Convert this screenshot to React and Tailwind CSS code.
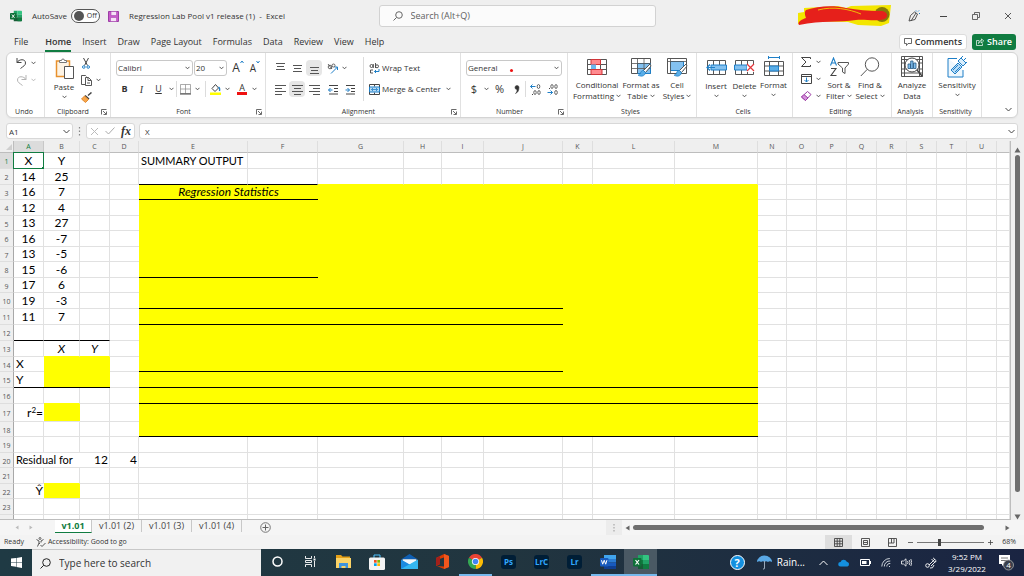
import React from "react";

/* ---------- small shared parts ---------- */

function Svg({ w, h, children, className = "" }) {
  return (
    <svg
      width={w}
      height={h}
      viewBox={`0 0 ${w} ${h}`}
      fill="none"
      stroke="#444444"
      strokeWidth="1"
      className={`shrink-0 ${className}`}
      aria-hidden="true"
    >
      {children}
    </svg>
  );
}

function Chevron({ className = "" }) {
  return (
    <Svg w={5} h={4} className={className}>
      <path d="M.5 .8 2.5 2.8 4.5 .8" strokeWidth=".9" />
    </Svg>
  );
}

function IconButton({ label, active, className = "w-4", children }) {
  return (
    <button
      type="button"
      aria-label={label}
      className={`flex h-4 items-center justify-center rounded-sm ${active ? "bg-[#e6e6e6]" : ""} ${className}`}
    >
      {children}
    </button>
  );
}

function Divider() {
  return <span className="h-4 w-px shrink-0 bg-[#dcdcdc]" />;
}

function Group({ name, launcher, className, children }) {
  return (
    <section aria-label={name} className={`flex shrink-0 flex-col border-r border-[#e1e1e1] ${className}`}>
      <div className="flex h-[53px]">{children}</div>
      <div className="flex h-[11px] items-center pr-[3px] text-[7px] leading-[11px]">
        <span className="flex-1 text-center">{name}</span>
        {launcher && (
          <button type="button" aria-label={`${name} settings`}>
            <Svg w={6} h={6}>
              <path d="M.5 5.5V.5h5M2 2l3 3M5.5 2.5v3h-3" strokeWidth=".8" />
            </Svg>
          </button>
        )}
      </div>
    </section>
  );
}

function BigButton({ lines, menu, chevronBelow, icon, className }) {
  return (
    <button type="button" className={`flex shrink-0 flex-col items-center ${className}`}>
      <span className="flex h-[25px] items-center">{icon}</span>
      {lines.map((line, i) => (
        <span key={line} className="flex items-center gap-[2px] text-[8px] leading-[11px] whitespace-nowrap">
          {line}
          {menu && i === lines.length - 1 && <Chevron />}
        </span>
      ))}
      {chevronBelow && (
        <span className="flex h-[10px] items-center">
          <Chevron />
        </span>
      )}
    </button>
  );
}

function Combo({ label, value, className }) {
  return (
    <label className={`flex h-4 items-center rounded-[3px] border border-[#c8c8c8] bg-white pr-[2px] pl-[1px] ${className}`}>
      <span className="sr-only">{label}</span>
      <select className="h-[14px] min-w-0 flex-1 appearance-none bg-transparent text-[8px] leading-[14px] outline-none" defaultValue={value}>
        <option>{value}</option>
      </select>
      <Chevron />
    </label>
  );
}

/* ---------- ribbon icons ---------- */

function Lines({ rows }) {
  return (
    <Svg w={11} h={11}>
      {rows.map(([x1, x2, y]) => (
        <path key={y} d={`M${x1} ${y}.5H${x2}`} stroke="#555555" />
      ))}
    </Svg>
  );
}

function GridIcon({ children }) {
  return (
    <Svg w={20} h={20}>
      <path d="M.5 2.5h19v15H.5zM.5 7.5h19M.5 12.5h19M7 2.5v15M13.5 2.5v15" stroke="#555555" fill="white" />
      {children}
    </Svg>
  );
}

const brush = (
  <>
    <path d="M19 7 12.5 13.5 14.5 15.5 20 9z" fill="white" stroke="#555555" />
    <path d="M12.5 13.5c-2 0-2.500 1-3 2.500-.4 1.500-1.500 2-2.500 2 2.500 2 7 1.500 7.500-2.500z" fill="#5aaee8" stroke="#1e7fc7" strokeWidth=".7" />
  </>
);

function ConditionalIcon() {
  return (
    <GridIcon>
      <path d="M4 2.500h9.500v5H4z" fill="#ff8a8f" stroke="#d13438" />
      <path d="M4 7.500h5v5H4z" fill="#6db7ee" stroke="none" />
      <path d="M4 12.500h11v5H4z" fill="#ff8a8f" stroke="#d13438" />
    </GridIcon>
  );
}

function FormatTableIcon() {
  return (
    <Svg w={21} h={20}>
      <path d="M.5 1.500h19v15H.5z" fill="white" stroke="#555555" />
      <path d="M6.500 6.500h13v10h-13z" fill="#83c1f0" stroke="#1e7fc7" />
      <path d="M.5 6.500h19M.5 11.500h19M6.500 1.500v15M13 1.500v15" stroke="#555555" strokeWidth=".8" />
      {brush}
    </Svg>
  );
}

function CellStylesIcon() {
  return (
    <Svg w={21} h={20}>
      <path d="M.5 1.500h19v15H.5z" fill="white" stroke="#555555" />
      <path d="M3.500 4.500h13v9h-13z" fill="#83c1f0" stroke="#1e7fc7" />
      <path d="M.5 4.500h19M3.500 1.500v15" stroke="#555555" strokeWidth=".8" />
      {brush}
    </Svg>
  );
}

function InsertIcon() {
  return (
    <Svg w={21} h={17}>
      <path d="M1.500 1.500h18v14h-18zM7.500 1.500v14M13.500 1.500v14" stroke="#555555" fill="white" />
      <path d="M5 6h15.500v5H5z" fill="#83c1f0" stroke="#1e7fc7" />
      <path d="M1 8.500h8M4 5.500 1 8.500 4 11.500" stroke="#1e7fc7" strokeWidth="1.200" />
    </Svg>
  );
}

function DeleteIcon() {
  return (
    <Svg w={21} h={17}>
      <path d="M1.500 1.500h18v14h-18zM7.500 1.500v14M13.500 1.500v14" stroke="#555555" fill="white" />
      <path d="M.5 6H13v5H.5z" fill="#83c1f0" stroke="#1e7fc7" />
      <path d="M13 5h8v8h-8z" fill="white" stroke="none" />
      <path d="m13 5 7 7M20 5l-7 7" stroke="#e3353b" strokeWidth="1.200" />
    </Svg>
  );
}

function FormatIcon() {
  return (
    <Svg w={20} h={21}>
      <path d="M4 1.500h12M4.500 0v3M15.500 0v3" stroke="#1e7fc7" />
      <path d="M.5 5.500h19v14H.5zM.5 10h19M.5 15h19M5.500 5.500v14M14.500 5.500v14" stroke="#555555" fill="white" />
      <path d="M5.500 10h9v5h-9z" fill="#5aaee8" stroke="#1e7fc7" />
    </Svg>
  );
}

function SortIcon() {
  return (
    <Svg w={20} h={20}>
      <path d="M1.500 8.500 4.500 1l3 7.500M2.500 6h4" stroke="#1e7fc7" strokeWidth="1.100" />
      <path d="M2 11.500h5L2 18.500h5.500" strokeWidth="1.100" />
      <path d="M9 5.500h10.500v1.500L16 11v5.500l-2.500-1.500v-4L9 7z" stroke="#555555" />
    </Svg>
  );
}

function FindIcon() {
  return (
    <Svg w={20} h={20}>
      <circle cx="12" cy="7.500" r="6.700" stroke="#555555" />
      <path d="M7.300 12.300.8 19" stroke="#555555" />
    </Svg>
  );
}

function AnalyzeIcon() {
  return (
    <Svg w={22} h={22}>
      <path d="M.5 .5h21v20H.5zM.5 3.500h21M.5 7h21M.5 13h21M.5 17h21M3.500 .5v20M18.500 .5v20" stroke="#555555" fill="white" />
      <circle cx="11" cy="9" r="7" fill="white" stroke="#444444" />
      <path d="M7 8v4.500h2.500V8zM9.700 5v7.500H12V5zM12.500 7v5.500h2.500V7z" fill="#83c1f0" stroke="#2a5b84" strokeWidth=".8" />
      <path d="m16 14 5.500 6.500" strokeWidth="1.500" />
    </Svg>
  );
}

function SensitivityIcon() {
  return (
    <Svg w={20} h={22}>
      <path d="M1 2.500h9M1 2.500V21h15v-7" stroke="#1e7fc7" fill="#eef7fd" />
      <path d="m4 14 7-7 4 4-7 7z" fill="#b9dcf6" stroke="#1e7fc7" />
      <path d="m6 14 5-5M8 16l5-5" stroke="#1e7fc7" />
      <path d="m11 5 3-3 5 5-3 3zM14 2l2-2M16.500 4.500l2.500-2.500M19 7l1-1" stroke="#1e7fc7" fill="#d9edfb" />
    </Svg>
  );
}

/* ---------- title bar ---------- */

function ExcelLogo({ className = "" }) {
  return (
    <Svg w={16} h={16} className={className}>
      <g stroke="none">
        <path d="M5 1h5v5H5z" fill="#21a366" />
        <path d="M10 1h5a1 1 0 0 1 1 1v4h-6z" fill="#33c481" />
        <path d="M5 6h5v4H5z" fill="#107c41" />
        <path d="M10 6h6v4h-6z" fill="#21a366" />
        <path d="M5 10h11v4a1 1 0 0 1-1 1H5z" fill="#185c37" />
        <path d="M10 10h6v4a1 1 0 0 1-1 1h-5z" fill="#107c41" />
        <rect x="0" y="4" width="8.500" height="8.500" rx="1" fill="#0f7038" />
      </g>
      <path d="m2.500 6 3.500 4.500M6 6l-3.500 4.500" stroke="white" strokeWidth="1.200" />
    </Svg>
  );
}

function TitleBar() {
  return (
    <header className="grid h-8 shrink-0 grid-cols-[minmax(0,1fr)_minmax(0,277px)_minmax(0,1fr)] items-center pl-[10px]">
      <div className="flex items-center whitespace-nowrap">
        <ExcelLogo className="h-3 w-3" />
        <label className="ml-[10px] flex items-center gap-1 text-[8px]">
          AutoSave
          <span className="flex h-[14px] w-[29px] items-center gap-[3px] rounded-full border border-[#555] bg-white px-[2px]">
            <input type="checkbox" role="switch" className="h-[10px] w-[10px] appearance-none rounded-full bg-[#555]" />
            <span className="text-[7px] leading-3">Off</span>
          </span>
        </label>
        <button type="button" aria-label="Save" className="ml-2">
          <Svg w={11} h={11}>
            <path d="M.5 .5h10v10H.5z" fill="#c85bcb" stroke="#9c3fa5" />
            <path d="M3 .5h5.500v4H3zM2.500 6.500h6v4h-6z" fill="#f5e3f6" stroke="#a948b1" strokeWidth=".6" />
          </Svg>
        </button>
        <h1 className="ml-[10px] text-[8px] whitespace-pre">{"Regression Lab Pool v1 release (1)  -  Excel"}</h1>
      </div>
      <label className="flex h-[22px] items-center gap-2 rounded-[3px] border border-[#d2d2d2] bg-[#fbfbfb] pl-[13px]">
        <Svg w={10} h={10}>
          <circle cx="6" cy="4" r="3.300" stroke="#666" />
          <path d="M3.500 6.500.5 9.500" stroke="#666" />
        </Svg>
        <input
          aria-label="Search"
          placeholder="Search (Alt+Q)"
          className="min-w-0 flex-1 bg-transparent text-[9px] outline-none placeholder:text-[#616161]"
        />
      </label>
      <div className="flex items-center justify-end pr-3">
        <Svg w={94} h={22} className="mr-4">
          <g stroke="none">
            <path d="M6 3 40 1l8 2 5-2 40-1-2 18-8 3-23-1-10-3-42-1-8 3V8l6-1z" fill="#f3e600" />
            <circle cx="84" cy="9.500" r="7.500" fill="#857a08" />
            <path d="M8 5c12-4 27-5 40-2 12 2 22 3 34 3 10 0 9 9 0 9-8 1-17-1-24 0-16 3-34 0-57 5-2-3 2-5 7-7-1-3-2-6 0-8z" fill="#e6201b" />
          </g>
          <path d="M20 5c15-4 31-1 43 4" stroke="#f3e600" strokeWidth=".8" />
        </Svg>
        <button type="button" aria-label="Draw with pen" className="mr-5">
          <Svg w={12} h={12}>
            <path d="m1 11 1.500-5.500L6.500 2l3 2L7 9.500zM3 11l5-8" strokeWidth=".9" />
            <path d="M8 .5v1M10 1.500l1-1M11 3.500h1" stroke="#1e7fc7" />
          </Svg>
        </button>
        <button type="button" aria-label="Minimize" className="mr-[25px]">
          <Svg w={7} h={8}><path d="M0 4.500h7" /></Svg>
        </button>
        <button type="button" aria-label="Restore" className="mr-6">
          <Svg w={8} h={8}><path d="M.5 2.500h5v5h-5zM2.500 2V.5h5v5H6" strokeWidth=".8" /></Svg>
        </button>
        <button type="button" aria-label="Close">
          <Svg w={8} h={8}><path d="m1 1 6 6M7 1 1 7" strokeWidth=".9" /></Svg>
        </button>
      </div>
    </header>
  );
}

const ribbonTabs = ["Home", "Insert", "Draw", "Page Layout", "Formulas", "Data", "Review", "View", "Help"];

function TabRow() {
  return (
    <div className="flex h-5 shrink-0 items-center justify-between pr-2 pl-[14px]">
      <nav className="flex items-center gap-[11px] text-[9px]">
        <button type="button" className="mr-[6px] h-5">File</button>
        {ribbonTabs.map((tab) => (
          <button
            key={tab}
            type="button"
            className={`flex h-5 flex-col items-center justify-center whitespace-nowrap ${
              tab === "Home" ? "border-y-2 border-t-transparent border-b-[#107c41] font-semibold" : ""
            }`}
          >
            {tab}
          </button>
        ))}
      </nav>
      <div className="flex items-center gap-[5px] text-[9px] font-semibold">
        <button type="button" className="flex h-4 items-center gap-[3px] rounded-[3px] border border-[#dcdcdc] bg-white px-1">
          <Svg w={8} h={8}><path d="M.5 .5h7v5H4L2.500 7.500v-2h-2z" strokeWidth=".8" /></Svg>
          Comments
        </button>
        <button type="button" className="flex h-4 items-center gap-[3px] rounded-[3px] bg-[#107c41] px-1 text-white">
          <Svg w={8} h={8}>
            <path d="M3 2.500H.5v5h6V5.500M2.500 5.500c0-2 1-3 3-3V.8L7.700 3 5.500 5V3.800c-1.500 0-2.300.5-3 1.700z" stroke="white" strokeWidth=".7" />
          </Svg>
          Share
        </button>
      </div>
    </div>
  );
}

/* ---------- ribbon ---------- */

function Ribbon() {
  return (
    <div className="mx-[6px] flex h-[66px] shrink-0 overflow-hidden rounded-md border border-[#d4d4d4] bg-white shadow-xs">
      <Group name="Undo" className="w-[38px]">
        <div className="flex flex-col gap-px pt-[2px] pl-[6px]">
          <div className="flex items-center gap-[2px]">
            <IconButton label="Undo"><Svg w={11} h={11}><path d="M1 0v4.500h4.500M1 4.500C3 1 9.500 .5 9.500 5c0 2.500-2 3-5 5.500" /></Svg></IconButton>
            <Chevron />
          </div>
          <div className="flex items-center gap-[2px] opacity-40">
            <IconButton label="Redo"><Svg w={11} h={11}><path d="M10 0v4.500H5.500M10 4.500C8 1 1.500 .5 1.500 5c0 2.500 2 3 5 5.500" /></Svg></IconButton>
            <Chevron />
          </div>
        </div>
      </Group>

      <Group name="Clipboard" launcher className="w-[66px]">
        <BigButton
          className="ml-[5px] w-7 pt-[3px]"
          lines={["Paste"]}
          chevronBelow
          icon={
            <Svg w={19} h={21}>
              <path d="M1.500 3h13v15.500h-13z" fill="#fdf3e4" stroke="#e8912d" strokeWidth="1.500" />
              <path d="M4.500 4.500V2.500H6.500a1.500 1.500 0 0 1 3 0h2v2z" fill="white" stroke="#777" />
              <path d="M9.500 8.500h9v12h-9z" fill="white" stroke="#555" />
            </Svg>
          }
        />
        <div className="flex flex-col gap-px pt-[2px]">
          <IconButton label="Cut" className="w-4">
            <Svg w={8} h={11}>
              <path d="m1.500 0 4 7.500M6.500 0l-4 7.500" />
              <circle cx="1.800" cy="9" r="1.300" stroke="#1e7fc7" /><circle cx="6.200" cy="9" r="1.300" stroke="#1e7fc7" />
            </Svg>
          </IconButton>
          <div className="flex items-center gap-[2px]">
            <IconButton label="Copy">
              <Svg w={11} h={11}><path d="M4 9.500H.5v-9h4l1 1M4.500 2.500h3l3 3v5h-6zM7 2.500v3h3M6 8h3" fill="white" strokeWidth=".9" /></Svg>
            </IconButton>
            <Chevron />
          </div>
          <IconButton label="Format painter" className="w-4">
            <Svg w={11} h={11}>
              <path d="m10.500 .5-3.500 3M4 3.500 8 7" strokeWidth="1.500" />
              <path d="m3.500 4 4 3.500-3 3L.5 7z" fill="#f7a64a" stroke="#d97a18" strokeWidth=".8" />
            </Svg>
          </IconButton>
        </div>
      </Group>

      <Group name="Font" launcher className="w-[155px]">
        <div className="flex flex-col gap-[5px] pt-[7px] pl-[5px]">
          <div className="flex items-center gap-[1px]">
            <Combo label="Font name" value="Calibri" className="w-[77px]" />
            <Combo label="Font size" value="20" className="w-[33px]" />
            <button type="button" aria-label="Increase font size" className="ml-[2px] flex w-4 justify-center text-[12px] leading-4">
              A<Svg w={4} h={4}><path d="m.5 3 1.500-2L3.500 3" stroke="#1e7fc7" /></Svg>
            </button>
            <button type="button" aria-label="Decrease font size" className="flex w-4 justify-center text-[10px] leading-4">
              A<Svg w={4} h={4}><path d="m.5 1 1.500 2L3.500 1" stroke="#1e7fc7" /></Svg>
            </button>
          </div>
          <div className="flex items-center text-[9px]">
            <IconButton label="Bold" className="w-[17px]"><b>B</b></IconButton>
            <IconButton label="Italic" className="w-[17px]"><i className="font-['Liberation_Serif',serif] text-[10px]">I</i></IconButton>
            <IconButton label="Underline" className="w-[17px]"><span className="underline">U</span></IconButton>
            <Chevron className="mx-[2px]" />
            <Divider />
            <IconButton label="Borders" className="ml-[1px] w-[15px]">
              <Svg w={11} h={11}><path d="M.5 .5h10v9H.5zM5.500 .5v9M.5 5h10" strokeWidth=".7" stroke="#888" /><path d="M0 10h11" /></Svg>
            </IconButton>
            <Chevron className="mr-[5px] ml-[2px]" />
            <Divider />
            <IconButton label="Fill color" className="w-[19px]">
              <Svg w={11} h={11}>
                <path d="m2 4.500 3.500-4 3 3.500L5 7.500z" /><path d="M8.500 3c1.500 1 1.500 2 1 4" stroke="#1e7fc7" strokeWidth="1.300" />
                <path d="M0 8.500h11V11H0z" fill="#ffff00" stroke="none" />
              </Svg>
            </IconButton>
            <Chevron className="mr-[2px]" />
            <IconButton label="Font color" className="w-5">
              <span className="border-b-[3px] border-[#ee1111] px-[2px] text-[9px] leading-[9px]">A</span>
            </IconButton>
            <Chevron />
          </div>
        </div>
      </Group>

      <Group name="Alignment" launcher className="w-[195px]">
        <div className="flex w-[97px] flex-col gap-[5px] pt-[7px] pl-[6px]">
          <div className="flex items-center gap-[1px]">
            <IconButton label="Top align"><Lines rows={[[1, 10, 0], [2, 9, 3], [1, 10, 6]]} /></IconButton>
            <IconButton label="Middle align"><Lines rows={[[1, 10, 2], [2, 9, 5], [1, 10, 8]]} /></IconButton>
            <IconButton label="Bottom align" active><Lines rows={[[1, 10, 4], [2, 9, 7], [1, 10, 10]]} /></IconButton>
            <IconButton label="Orientation" className="ml-[2px] w-4">
              <Svg w={12} h={11}>
                <path d="M4 10.500 10.500 4M7.500 4h3v3" stroke="#1e7fc7" /><circle cx="3" cy="4" r="1.800" strokeWidth=".8" /><circle cx="6.500" cy="2.500" r="1.500" strokeWidth=".8" /><path d="m1 1 4 5" strokeWidth=".8" />
              </Svg>
            </IconButton>
            <Chevron />
          </div>
          <div className="flex items-center gap-[1px]">
            <IconButton label="Align left"><Lines rows={[[0, 11, 1], [0, 7, 4], [0, 11, 7], [0, 7, 10]]} /></IconButton>
            <IconButton label="Center" active><Lines rows={[[0, 11, 1], [2, 9, 4], [0, 11, 7], [2, 9, 10]]} /></IconButton>
            <IconButton label="Align right"><Lines rows={[[0, 11, 1], [4, 11, 4], [0, 11, 7], [4, 11, 10]]} /></IconButton>
            <IconButton label="Decrease indent" className="ml-[2px] w-4">
              <Svg w={11} h={11}><path d="M1 1.500h9M6 4.500h4M6 7.500h4M1 10h9" /><path d="M.5 6h4M2.500 4 .5 6l2 2" stroke="#1e7fc7" /></Svg>
            </IconButton>
            <IconButton label="Increase indent">
              <Svg w={11} h={11}><path d="M1 1.500h9M6 4.500h4M6 7.500h4M1 10h9" /><path d="M.5 6h4M2.500 4l2 2-2 2" stroke="#1e7fc7" /></Svg>
            </IconButton>
          </div>
        </div>
        <span className="mt-1 h-11 w-px bg-[#dcdcdc]" />
        <div className="flex flex-1 flex-col gap-[5px] pt-[7px] pl-[5px] text-[8px]">
          <button type="button" className="flex h-4 items-center gap-[2px]">
            <Svg w={11} h={11}>
              <circle cx="2.500" cy="3" r="1.500" strokeWidth=".9" /><path d="M4.300 1v4M6.500 0v5" strokeWidth=".9" /><circle cx="8" cy="3.300" r="1.500" strokeWidth=".9" /><path d="M4 7H1.500v3H4" strokeWidth=".9" />
              <path d="M10 6v2.500H5.500M7 7 5.500 8.500 7 10" stroke="#1e7fc7" />
            </Svg>
            Wrap Text
          </button>
          <button type="button" className="flex h-4 items-center gap-[2px] whitespace-nowrap">
            <Svg w={11} h={11}>
              <path d="M.5 .5h10v10H.5zM5.500 .5v2M5.500 8.500v2" /><path d="M.5 3h10v5H.5z" fill="#b9dcf6" stroke="#1e7fc7" /><path d="M2.500 5.500h6M4 4 2.500 5.500 4 7M7 4l1.500 1.500L7 7" stroke="#1e7fc7" strokeWidth=".8" />
            </Svg>
            Merge &amp; Center
            <Chevron className="ml-[3px]" />
          </button>
        </div>
      </Group>

      <Group name="Number" launcher className="w-[107px]">
        <div className="flex flex-1 flex-col gap-[5px] px-[5px] pt-[7px]">
          <label className="flex h-4 items-center rounded-[3px] border border-[#c8c8c8] pr-[2px] pl-[1px]">
            <span className="sr-only">Number format</span>
            <select className="h-[14px] w-10 appearance-none bg-transparent text-[8px] leading-[14px] outline-none" defaultValue="General">
              <option>General</option>
            </select>
            <span className="mt-1 ml-[2px] h-[3px] w-[3px] rounded-full bg-[#ee1111]" />
            <Chevron className="ml-auto" />
          </label>
          <div className="flex items-center text-[11px]">
            <IconButton label="Accounting format">$</IconButton>
            <Chevron className="mr-[1px] ml-[2px]" />
            <IconButton label="Percent style" className="w-[19px]">%</IconButton>
            <IconButton label="Comma style" className="w-4">
              <Svg w={6} h={9}><path d="M1 2.500a2 2 0 1 1 4 0C5 6 3.500 7.500 1.500 8.500 3 7 3 6 3 4.500A2 2 0 0 1 1 2.500z" fill="#333" strokeWidth=".6" /></Svg>
            </IconButton>
            <Divider />
            <IconButton label="Increase decimal" className="ml-[1px] w-[17px]">
              <Svg w={11} h={11}><path d="M.5 2.500h5M2.500 .5l-2 2 2 2" stroke="#1e7fc7" /><ellipse cx="8.500" cy="2.500" rx="1.300" ry="2" strokeWidth=".8" /><ellipse cx="5" cy="8.500" rx="1.200" ry="2" strokeWidth=".8" /><ellipse cx="9" cy="8.500" rx="1.200" ry="2" strokeWidth=".8" /><path d="M2 10.500h1" /></Svg>
            </IconButton>
            <IconButton label="Decrease decimal" className="w-[17px]">
              <Svg w={11} h={11}><path d="M.5 8.500h5M3.500 6.500l2 2-2 2" stroke="#1e7fc7" /><ellipse cx="9" cy="8.500" rx="1.300" ry="2" strokeWidth=".8" /><ellipse cx="5" cy="2.500" rx="1.200" ry="2" strokeWidth=".8" /><ellipse cx="9" cy="2.500" rx="1.200" ry="2" strokeWidth=".8" /><path d="M2 4.500h1" /></Svg>
            </IconButton>
          </div>
        </div>
      </Group>

      <Group name="Styles" className="w-[129px]">
        <BigButton className="ml-1 w-[50px] pt-[1px]" lines={["Conditional", "Formatting"]} menu icon={<ConditionalIcon />} />
        <BigButton className="w-[38px] pt-[1px]" lines={["Format as", "Table"]} menu icon={<FormatTableIcon />} />
        <BigButton className="w-[34px] pt-[1px]" lines={["Cell", "Styles"]} menu icon={<CellStylesIcon />} />
      </Group>

      <Group name="Cells" className="w-24">
        <BigButton className="ml-[5px] w-7 pt-[2px]" lines={["Insert"]} chevronBelow icon={<InsertIcon />} />
        <BigButton className="w-[29px] pt-[2px]" lines={["Delete"]} chevronBelow icon={<DeleteIcon />} />
        <BigButton className="w-[29px] pt-[1px]" lines={["Format"]} chevronBelow icon={<FormatIcon />} />
      </Group>

      <Group name="Editing" className="w-[99px]">
        <div className="flex w-[30px] flex-col gap-px pt-[1px] pl-[5px]">
          <div className="flex items-center gap-[2px]">
            <IconButton label="AutoSum"><Svg w={10} h={10}><path d="M9.500 2V.5h-9L5 5 .5 9.500h9V8" /></Svg></IconButton>
            <Chevron />
          </div>
          <div className="flex items-center gap-[2px]">
            <IconButton label="Fill">
              <Svg w={11} h={10}><path d="M.5 .5h10v9H.5zM.5 2.500h10" /><path d="M5.500 3.500v4.500M3.500 6l2 2 2-2" stroke="#1e7fc7" /></Svg>
            </IconButton>
            <Chevron />
          </div>
          <div className="flex items-center gap-[2px]">
            <IconButton label="Clear">
              <Svg w={11} h={10}><path d="M.5 6 6.500.5 10 3.500 4.500 9.500z" fill="white" stroke="#9c3fa5" /><path d="M.5 6 3 3.500 7 7 4.500 9.500z" fill="#d590dc" stroke="#9c3fa5" /></Svg>
            </IconButton>
            <Chevron />
          </div>
        </div>
        <BigButton className="w-[32px] pt-[1px]" lines={["Sort &", "Filter"]} menu icon={<SortIcon />} />
        <BigButton className="w-[30px] pt-[1px]" lines={["Find &", "Select"]} menu icon={<FindIcon />} />
      </Group>

      <Group name="Analysis" className="w-[41px]">
        <BigButton className="w-10 pt-[1px]" lines={["Analyze", "Data"]} icon={<AnalyzeIcon />} />
      </Group>

      <Group name="Sensitivity" className="w-[49px]">
        <BigButton className="w-12 pt-[1px]" lines={["Sensitivity"]} chevronBelow icon={<SensitivityIcon />} />
      </Group>

      <button type="button" aria-label="Collapse ribbon" className="mb-[5px] ml-auto self-end pr-[5px]">
        <Svg w={7} h={5}><path d="m.5 1 3 3 3-3" /></Svg>
      </button>
    </div>
  );
}

/* ---------- formula bar ---------- */

function FormulaBar() {
  return (
    <div className="flex h-[23px] shrink-0 items-center px-[6px] pt-[5px] pb-[2px]">
      <label className="flex h-4 w-[67px] items-center rounded-[3px] border border-[#d8d8d8] bg-white px-[2px]">
        <span className="sr-only">Name box</span>
        <input defaultValue="A1" className="h-[14px] min-w-0 flex-1 bg-transparent text-[8px] outline-none" />
        <Svg w={7} h={5}><path d="m.5 1 3 3 3-3" /></Svg>
      </label>
      <Svg w={3} h={9} className="mx-[5px]"><path d="M1.500 0v9" strokeDasharray="1.500 2" strokeWidth="1.200" stroke="#888" /></Svg>
      <div className="flex h-4 w-[49px] items-center justify-between rounded-[3px] border border-[#d8d8d8] bg-white px-[3px]">
        <button type="button" aria-label="Cancel"><Svg w={9} h={9}><path d="m1 1 7 7M8 1 1 8" stroke="#bbb" /></Svg></button>
        <button type="button" aria-label="Enter"><Svg w={10} h={8}><path d="m.5 4 3 3 6-6.500" stroke="#aaa" /></Svg></button>
        <button type="button" aria-label="Insert function" className="font-['Liberation_Serif',serif] text-[12px] leading-[14px] font-bold italic">fx</button>
      </div>
      <label className="ml-1 flex h-4 flex-1 items-center rounded-[3px] border border-[#d8d8d8] bg-white pr-[2px] pl-[5px]">
        <span className="sr-only">Formula</span>
        <input defaultValue="X" className="h-[14px] min-w-0 flex-1 bg-transparent text-[8px] outline-none" />
        <Svg w={7} h={5}><path d="m.5 1 3 3 3-3" /></Svg>
      </label>
    </div>
  );
}

/* ---------- worksheet ---------- */

const columns = [
  ["A", "w-[30px]"], ["B", "w-[36px]"], ["C", "w-[30px]"], ["D", "w-[29px]"], ["E", "w-[109px]"],
  ["F", "w-[70px]"], ["G", "w-[86px]"], ["H", "w-[38px]"], ["I", "w-[42px]"], ["J", "w-[79px]"],
  ["K", "w-[30px]"], ["L", "w-[82px]"], ["M", "w-[83px]"], ["N", "w-[29px]"], ["O", "w-[30px]"],
  ["P", "w-[30px]"], ["Q", "w-[30px]"], ["R", "w-[30px]"], ["S", "w-[30px]"], ["T", "w-[30px]"],
  ["U", "w-[30px]"], ["", ""],
];

const rowHeights = [
  "h-[16px]", "h-[16px]", "h-[15px]", "h-[16px]", "h-[15px]", "h-[16px]", "h-[15px]", "h-[16px]",
  "h-[15px]", "h-[16px]", "h-[16px]", "h-[16px]", "h-[16px]", "h-[15px]", "h-[16px]", "h-[16px]",
  "h-[18px]", "h-[15px]", "h-[16px]", "h-[15px]", "h-[16px]", "h-[15px]", "h-[16px]",
];

const cells = {
  A1: { v: "X" }, B1: { v: "Y" }, E1: { v: "SUMMARY OUTPUT", align: "left", label: true },
  E3: { v: "Regression Statistics", italic: true, span: 2 },
  B13: { v: "X", italic: true }, C13: { v: "Y", italic: true },
  A14: { v: "X", align: "left" }, A15: { v: "Y", align: "left" },
  A17: { v: <>r<sup className="text-[8px] leading-none">2</sup>=</>, align: "right" },
  A20: { v: "Residual for", align: "left", span: 2, label: true },
  C20: { v: "12", align: "right" }, D20: { v: "4", align: "right" },
  A22: { v: "Ŷ", align: "right" },
};
[[14, 25], [16, 7], [12, 4], [13, 27], [16, -7], [13, -5], [15, -6], [17, 6], [19, -3], [11, 7]].forEach(([x, y], i) => {
  cells[`A${i + 2}`] = { v: x };
  cells[`B${i + 2}`] = { v: y };
});

const inBlock = (c, r, [c1, r1, c2, r2]) => c >= c1 && c <= c2 && r >= r1 && r <= r2;
const filledRanges = [[4, 3, 12, 18], [1, 14, 2, 15], [1, 17, 1, 17], [1, 22, 1, 22]];
const isFilled = (c, r) => filledRanges.some((range) => inBlock(c, r, range));

/* row: [first column, last column] of the rules drawn under it */
const rules = {
  2: [4, 5], 3: [4, 5], 8: [4, 5], 10: [4, 9], 11: [4, 9], 12: [0, 2], 14: [4, 9], 16: [4, 12], 18: [4, 12],
};
const hasRule = (c, r) =>
  (rules[r] && c >= rules[r][0] && c <= rules[r][1]) || (r === 15 && (c <= 2 || (c >= 4 && c <= 12)));

const alignClass = { left: "text-left pl-[2px]", right: "text-right pr-[1px]", center: "text-center" };

function Cell({ c, r }) {
  const data = cells[`${columns[c][0]}${r}`] || {};
  const span = data.span || 1;
  const filled = isFilled(c, r);
  const bottom = hasRule(c, r)
    ? "border-b-black"
    : isFilled(c, r + 1)
      ? "border-b-[#ffff00]"
      : filled && c >= 4
        ? "border-b-[#ffff00]"
        : "border-b-[#e1e1e1]";
  const bare = filled || isFilled(c + 1, r) || (r === 20 && c < 2);
  return (
    <td
      colSpan={span}
      className={`relative border-b p-0 align-middle leading-[14px] whitespace-nowrap ${bottom} ${
        bare ? "" : "border-r border-r-[#e1e1e1]"
      } ${filled ? "bg-[#ffff00]" : "bg-white"} ${data.italic ? "italic" : ""} ${data.label ? "text-[11px]" : ""} ${
        alignClass[data.align || "center"]
      }`}
    >
      {data.v}
      {c === 0 && r === 1 && (
        <span className="absolute -inset-px border border-[#107c41]">
          <span className="absolute -right-[2px] -bottom-[2px] h-[3px] w-[3px] bg-[#107c41]" />
        </span>
      )}
    </td>
  );
}

function Sheet() {
  return (
    <main className="flex min-h-0 flex-1">
      <div className="min-w-0 flex-1 overflow-hidden border-r border-b border-[#bdbdbd] bg-white">
        <table className="w-full table-fixed border-separate border-spacing-0 font-['Lato','Noto_Sans',sans-serif] text-[12px] text-black">
          <colgroup>
            <col className="w-[14px]" />
            {columns.map(([name, width]) => <col key={name} className={width} />)}
          </colgroup>
          <thead>
            <tr className="h-3 bg-[#efefef] font-['Open_Sans','Noto_Sans',sans-serif] text-[7px] leading-[11px] text-[#555]">
              <th className="border-r border-b border-[#bdbdbd] p-0">
                <Svg w={7} h={6} className="ml-auto"><path d="M6 0v6H0z" fill="#cfcfcf" stroke="none" /></Svg>
              </th>
              {columns.map(([name], i) => (
                <th
                  key={name}
                  className={`border-r border-b p-0 font-normal ${
                    i === 0 ? "border-r-[#c8c8c8] border-b-[#107c41] bg-[#dcdcdc] text-[#107c41]" : "border-r-[#dedede] border-b-[#bdbdbd]"
                  }`}
                >
                  {name}
                </th>
              ))}
            </tr>
          </thead>
          <tbody>
            {rowHeights.map((height, i) => (
              <tr key={i} className={height}>
                <th
                  className={`border-r border-b border-r-[#a8a8a8] border-b-[#dedede] p-0 pt-[3px] font-['Open_Sans','Noto_Sans',sans-serif] text-[7px] leading-[10px] font-normal ${
                    i === 0 ? "bg-[#dcdcdc] text-[#107c41]" : "bg-[#efefef] text-[#555]"
                  }`}
                >
                  {i + 1}
                </th>
                {columns.map((_, c) => {
                  const previous = c > 0 && cells[`${columns[c - 1][0]}${i + 1}`];
                  return previous && previous.span === 2 ? null : <Cell key={c} c={c} r={i + 1} />;
                })}
              </tr>
            ))}
            <tr className="h-4">
              <th className="border-r border-r-[#a8a8a8] bg-[#efefef] p-0" />
              {columns.map(([name]) => <td key={name} className="border-r border-[#e1e1e1] p-0" />)}
            </tr>
          </tbody>
        </table>
      </div>
      <div className="flex w-[13px] shrink-0 flex-col items-center pt-[6px]">
        <Svg w={7} h={6}><path d="M3.500 .5 6.500 5.500h-6z" fill="#666" stroke="none" /></Svg>
        <div className="flex w-full flex-1 justify-center py-[2px]">
          <span className="mb-5 w-[5px] rounded-full bg-[#6e6e6e]" />
        </div>
        <Svg w={7} h={6}><path d="M3.500 5.500 6.500 .5h-6z" fill="#666" stroke="none" /></Svg>
      </div>
    </main>
  );
}

function SheetTabs() {
  return (
    <div className="flex h-[15px] shrink-0 items-center bg-[#f5f5f5] text-[9px] leading-3 text-[#444]">
      <div className="flex w-[55px] items-center gap-[10px] pl-[15px]">
        <button type="button" aria-label="Previous sheet"><Svg w={4} h={5}><path d="M3.500 .5v4L.5 2.500z" fill="#bbb" stroke="none" /></Svg></button>
        <button type="button" aria-label="Next sheet"><Svg w={4} h={5}><path d="M.5 .5v4l3-2z" fill="#bbb" stroke="none" /></Svg></button>
      </div>
      <button type="button" className="h-[13px] w-[37px] self-start border-r border-b border-r-[#c8c8c8] border-b-[#107c41] bg-white font-bold text-[#107c41]">
        v1.01
      </button>
      {["v1.01 (2)", "v1.01 (3)", "v1.01 (4)"].map((name) => (
        <button key={name} type="button" className="h-3 w-[50px] self-start border-r border-[#c8c8c8] whitespace-nowrap">{name}</button>
      ))}
      <button type="button" aria-label="New sheet" className="ml-[18px]">
        <Svg w={11} h={11}><circle cx="5.500" cy="5.500" r="4.800" stroke="#777" /><path d="M5.500 2.500v6M2.500 5.500h6" stroke="#666" /></Svg>
      </button>
      <div className="ml-auto flex w-[418px] items-center">
        <span className="flex h-[15px] w-4 items-center justify-center bg-[#ececec]">
          <Svg w={2} h={8}><path d="M1 0v8" strokeDasharray="1.500 1.500" stroke="#999" /></Svg>
        </span>
        <Svg w={5} h={6} className="ml-[3px]"><path d="M4.500 .5v5L.5 3z" fill="#666" stroke="none" /></Svg>
        <span className="ml-[3px] h-[5px] w-[351px] rounded-full bg-[#6e6e6e]" />
        <Svg w={5} h={6} className="ml-[21px]"><path d="M.5 .5v5l4-2.500z" fill="#666" stroke="none" /></Svg>
      </div>
    </div>
  );
}

function StatusBar() {
  return (
    <div className="flex h-[14px] shrink-0 items-center bg-[#f3f3f3] text-[7px] text-[#333]">
      <span className="pl-1">Ready</span>
      <button type="button" className="ml-3 flex items-center gap-[2px]">
        <Svg w={10} h={10}>
          <circle cx="4" cy="1.500" r="1" strokeWidth=".8" /><path d="M.5 2.500 3 4v2L1.500 9.500M7.500 2.500 5 4v1.500M3 6l1 1" strokeWidth=".9" /><path d="m4.500 8 1.500 1.500L9.500 6" strokeWidth=".9" />
        </Svg>
        Accessibility: Good to go
      </button>
      <div className="ml-auto flex items-center">
        <button type="button" aria-label="Normal view" className="flex h-[14px] w-[27px] items-center justify-center bg-[#dedede]">
          <Svg w={9} h={9}><path d="M.5 .5h8v8h-8zM3.200 .5v8M5.800 .5v8M.5 3.200h8M.5 5.800h8" strokeWidth=".9" /></Svg>
        </button>
        <button type="button" aria-label="Page layout view" className="flex w-[27px] justify-center">
          <Svg w={9} h={9}><path d="M.5 .5h8v8h-8zM2.500 2.500h4v4h-4zM3 4.500h3" strokeWidth=".9" /></Svg>
        </button>
        <button type="button" aria-label="Page break view" className="flex w-[27px] justify-center">
          <Svg w={9} h={9}><path d="M.5 .5h8v8h-8zM3.500 .5v4.500M.5 5h5.500V.5" strokeWidth=".9" /></Svg>
        </button>
        <button type="button" aria-label="Zoom out" className="ml-[2px]"><Svg w={5} h={5}><path d="M0 2.500h5" strokeWidth=".8" /></Svg></button>
        <input
          type="range"
          aria-label="Zoom"
          defaultValue="33"
          className="mx-1 h-[7px] w-[67px] appearance-none bg-[linear-gradient(#777,#777)] bg-[length:100%_1px] bg-center bg-no-repeat [&::-webkit-slider-thumb]:h-[7px] [&::-webkit-slider-thumb]:w-[3px] [&::-webkit-slider-thumb]:appearance-none [&::-webkit-slider-thumb]:bg-[#444]"
        />
        <button type="button" aria-label="Zoom in"><Svg w={5} h={5}><path d="M0 2.500h5M2.500 0v5" strokeWidth=".8" /></Svg></button>
        <span className="w-[31px] pr-2 text-right">68%</span>
      </div>
    </div>
  );
}

/* ---------- taskbar ---------- */

function TaskButton({ label, state = "", children }) {
  const look = state === "active" ? "border-[#76b9ed] bg-[#4a5964]" : state === "open" ? "border-[#76b9ed]" : "border-transparent";
  return (
    <button type="button" aria-label={label} className={`flex w-[33px] items-center justify-center border-b-2 ${look}`}>
      {children}
    </button>
  );
}

function AdobeTile({ text }) {
  return (
    <span className="flex h-[14px] w-[15px] items-center justify-center rounded-[3px] bg-[#001e36] text-[8px] leading-none font-bold text-[#31a8ff]">
      {text}
    </span>
  );
}

function Taskbar() {
  return (
    <footer className="flex h-[27px] shrink-0 bg-linear-to-r from-[#1f3a44] via-[#21353f] to-[#1a2442] text-white">
      <button type="button" aria-label="Start" className="flex w-8 items-center justify-center">
        <Svg w={11} h={11}><path d="M0 1.500 5 1v4H0zM5.500.9 11 0v5H5.500zM0 5.500h5v4.200L0 9zM5.500 5.500H11V11l-5.500-.9z" fill="white" stroke="none" /></Svg>
      </button>
      <label className="flex w-[229px] items-center gap-2 border-t border-[#c8c8c8] bg-[#f1f1f1] pl-2">
        <Svg w={11} h={11}><circle cx="6.500" cy="4.500" r="3.800" stroke="#222" /><path d="M3.700 7.300.5 10.500" stroke="#222" /></Svg>
        <input aria-label="Search" placeholder="Type here to search" className="min-w-0 flex-1 bg-transparent text-[10px] outline-none placeholder:text-[#333]" />
      </label>
      <TaskButton label="Cortana"><Svg w={11} h={11}><circle cx="5.500" cy="5.500" r="4.500" stroke="white" strokeWidth="1.500" /></Svg></TaskButton>
      <TaskButton label="Task view">
        <Svg w={11} h={11}><path d="M.5 0v2.500h6V0M.5 11V8.500h6V11M.5 4.500h6v2h-6zM9.500 0v2M9.500 5v6" stroke="white" strokeWidth=".9" /><path d="M8.500 2.500h2v2h-2z" fill="white" stroke="none" /></Svg>
      </TaskButton>
      <TaskButton label="File Explorer">
        <Svg w={15} h={13}>
          <g stroke="none"><path d="M0 0h5l1.500 1.500H14V4H0z" fill="#e6a117" /><path d="M0 3h15v10H0z" fill="#fbd366" /><path d="M3 13V8h9v5h-2.500v-2h-4v2z" fill="#3f93dc" /></g>
        </Svg>
      </TaskButton>
      <TaskButton label="Microsoft Store">
        <Svg w={16} h={16}>
          <path d="M5 4V1h6v3" stroke="#4cc2ff" /><rect x="0" y="3.500" width="16" height="12.500" rx="1.500" fill="#f4f4f4" stroke="none" />
          <g stroke="none"><path d="M5 6h2.700v2.700H5z" fill="#f25022" /><path d="M8.300 6H11v2.700H8.300z" fill="#7fba00" /><path d="M5 9.300h2.700V12H5z" fill="#00a4ef" /><path d="M8.300 9.300H11V12H8.300z" fill="#ffb900" /></g>
        </Svg>
      </TaskButton>
      <TaskButton label="Mail">
        <Svg w={17} h={15}>
          <g stroke="none"><path d="M0 5.500 8.500 0 17 5.500z" fill="#0f5fb3" /><path d="M1.500 5.500h14V12h-14z" fill="#f2f7fb" /><path d="M0 5.500 17 15H0z" fill="#1c8be0" /><path d="M17 5.500V15H0z" fill="#35b7f1" /><path d="M1.500 5.500h14L8.500 10z" fill="#f2f7fb" /></g>
        </Svg>
      </TaskButton>
      <TaskButton label="Office">
        <Svg w={13} h={15}>
          <g stroke="none"><path d="M0 4 8 0l5 2v11l-5 2-7-3 7 .5V3.500L3.500 5v5.500L0 12z" fill="#d83b01" /><path d="M8 0l5 2v11l-5 2z" fill="#f0561d" /><path d="M0 4 4 2v8l-4 2z" fill="#a4201a" /></g>
        </Svg>
      </TaskButton>
      <TaskButton label="Chrome" state="open">
        <Svg w={15} h={15}>
          <g stroke="none">
            <path d="M7.500 7.500 1 3.750A7.500 7.500 0 0 1 14 3.750z" fill="#ea4335" /><path d="M7.500 7.500 14 3.750A7.500 7.500 0 0 1 7.500 15z" fill="#fbbc05" /><path d="M7.500 7.500V15A7.500 7.500 0 0 1 1 3.750z" fill="#34a853" />
            <circle cx="7.500" cy="7.500" r="3.600" fill="white" /><circle cx="7.500" cy="7.500" r="2.800" fill="#4285f4" />
          </g>
        </Svg>
      </TaskButton>
      <TaskButton label="Photoshop"><AdobeTile text="Ps" /></TaskButton>
      <TaskButton label="Lightroom Classic"><AdobeTile text="LrC" /></TaskButton>
      <TaskButton label="Lightroom"><AdobeTile text="Lr" /></TaskButton>
      <TaskButton label="Word" state="open">
        <Svg w={16} h={16}>
          <g stroke="none"><path d="M4 1h12v4H4z" fill="#41a5ee" /><path d="M4 5h12v3.500H4z" fill="#2b7cd3" /><path d="M4 8.500h12V12H4z" fill="#185abd" /><path d="M4 12h12v3H4z" fill="#103f91" /><rect x="0" y="4" width="8.500" height="8.500" rx="1" fill="#185abd" /></g>
          <path d="m1.500 6.200 1.200 4 1.500-4 1.500 4 1.200-4" stroke="white" />
        </Svg>
      </TaskButton>
      <TaskButton label="Excel" state="active"><ExcelLogo /></TaskButton>

      <div className="ml-auto flex items-center">
        <button type="button" aria-label="Help" className="mr-3 flex h-[15px] w-[15px] items-center justify-center rounded-full border border-white bg-[#1490df] text-[11px] leading-none font-bold">?</button>
        <button type="button" className="flex items-center gap-[5px] text-[10px]">
          <Svg w={15} h={15}><path d="M0 7a7.500 6.500 0 0 1 15 0q-2.500-1.500-4 0-2-1.500-3.500 0-1.500-1.500-3.500 0-1.500-1.500-4 0z" fill="#5aa9e6" stroke="none" /><path d="M7.500 6v7q0 1.500-1.500 1" stroke="#9ab" /></Svg>
          Rain...
        </button>
        <button type="button" aria-label="Hidden icons" className="ml-[14px]"><Svg w={9} h={6}><path d="m.5 5 4-4 4 4" stroke="white" /></Svg></button>
        <Svg w={12} h={8} className="ml-[10px]"><path d="M2.500 7.500a2.300 2.300 0 0 1 0-4.600 3.500 3.500 0 0 1 6.300-.2 2.500 2.500 0 0 1 .7 4.800z" fill="#1490df" stroke="none" /></Svg>
        <Svg w={11} h={7} className="ml-[10px]"><path d="M.5 .5h9v6h-9z" stroke="white" /><path d="M2 2h4.500v3H2zM10 2h1v3h-1z" fill="white" stroke="none" /></Svg>
        <Svg w={10} h={9} className="ml-[10px]"><path d="M.8 8.500a8 8 0 0 1 8-8M3.300 8.500a5.500 5.500 0 0 1 6-5.500M5.800 8.500a3 3 0 0 1 3.500-3M8 8.500h1" stroke="#dfe4ea" strokeWidth=".9" /></Svg>
        <Svg w={11} h={9} className="ml-[10px]"><path d="M.5 3h2L5 .8v7.400L2.500 6h-2zM6.500 3q1 1.500 0 3M8.200 2q1.600 2.500 0 5M9.800 1q2 3.500 0 7" stroke="white" strokeWidth=".8" /></Svg>
        <Svg w={12} h={12} className="ml-[13px]"><circle cx="2.500" cy="8.500" r="1.800" stroke="white" strokeWidth=".9" /><path d="m4 8 6-6M6 9l5-5M6.500 2 10 5.500M8 .8 11.500 4M5 11q3 1 4-3" stroke="white" strokeWidth=".9" /></Svg>
        <button type="button" className="ml-[6px] flex w-12 flex-col items-center text-[8px] leading-3 whitespace-nowrap">
          <span>9:52 PM</span>
          <span>3/29/2022</span>
        </button>
        <button type="button" aria-label="Notifications" className="mr-[10px] ml-[7px] flex">
          <Svg w={16} h={17}>
            <path d="M1 1h11v9H6L4 12v-2H1z" fill="white" stroke="none" /><path d="M3 4h7M3 6.500h7" stroke="#555" strokeWidth=".8" />
            <circle cx="10.500" cy="11" r="5" fill="#3a3f4c" stroke="#aaa" strokeWidth=".8" />
            <text x="10.500" y="13.800" textAnchor="middle" fontSize="8" fill="white" stroke="none">4</text>
          </Svg>
        </button>
      </div>
    </footer>
  );
}

export default function App() {
  return (
    <div className="flex h-screen flex-col overflow-hidden bg-[#efefef] font-['Open_Sans','Noto_Sans',sans-serif] text-[#333]">
      <TitleBar />
      <TabRow />
      <Ribbon />
      <FormulaBar />
      <Sheet />
      <SheetTabs />
      <StatusBar />
      <Taskbar />
    </div>
  );
}
